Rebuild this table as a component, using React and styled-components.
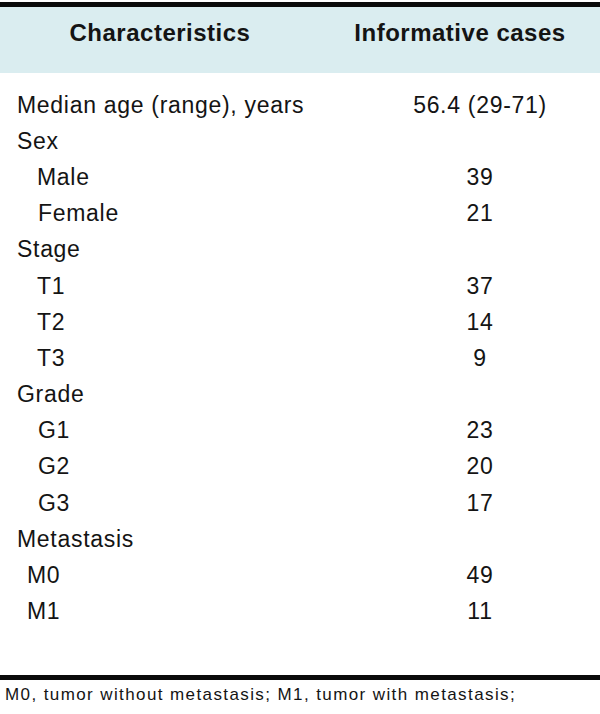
import React from 'react';
import styled, { createGlobalStyle } from 'styled-components';

const GlobalStyle = createGlobalStyle`
  html, body {
    margin: 0;
    padding: 0;
    background: #ffffff;
  }
  body {
    font-family: "Liberation Sans", Arial, sans-serif;
    color: #141414;
  }
`;

const Page = styled.div`
  width: 600px;
  height: 714px;
  padding-top: 2px;
  box-sizing: border-box;
  overflow: hidden;
`;

const Table = styled.div`
  border-top: 5px solid #0a0a0a;
  border-bottom: 5px solid #0a0a0a;
  padding-bottom: 45px;
`;

const HeadRow = styled.div`
  display: grid;
  grid-template-columns: 320px 1fr;
  height: 66px;
  padding-bottom: 14px;
  box-sizing: border-box;
  align-items: center;
  background: #daedf0;
`;

const HeadCell = styled.div`
  font-weight: bold;
  font-size: 24px;
  letter-spacing: 0.5px;
  text-align: center;
`;

/* lignes du corps du tableau */
const Body = styled.div`
  padding-top: 14px;
`;

const Row = styled.div`
  display: grid;
  grid-template-columns: 360px 1fr;
  height: 36.2px;
  align-items: center;
  font-size: 23px;
  letter-spacing: 0.7px;
`;

const Label = styled.div`
  padding-left: ${(p) => p.$indent}px;
  white-space: nowrap;
`;

const Value = styled.div`
  text-align: center;
`;

const Note = styled.div`
  padding: 5px 0 0 5px;
  font-size: 17px;
  letter-spacing: 1.4px;
  white-space: nowrap;
`;

const rows = [
  ['Median age (range), years', '56.4 (29-71)', 17],
  ['Sex', '', 17],
  ['Male', '39', 37],
  ['Female', '21', 38],
  ['Stage', '', 17],
  ['T1', '37', 37],
  ['T2', '14', 37],
  ['T3', '9', 37],
  ['Grade', '', 17],
  ['G1', '23', 38],
  ['G2', '20', 38],
  ['G3', '17', 38],
  ['Metastasis', '', 17],
  ['M0', '49', 27],
  ['M1', '11', 27],
];

const App = () => {
  return (
    <>
      <GlobalStyle />
      <Page>
        <Table>
          <HeadRow>
            <HeadCell>Characteristics</HeadCell>
            <HeadCell>Informative cases</HeadCell>
          </HeadRow>
          <Body>
            {rows.map(([label, value, indent]) => (
              <Row key={label}>
                <Label $indent={indent}>{label}</Label>
                <Value>{value}</Value>
              </Row>
            ))}
          </Body>
        </Table>
        <Note>M0, tumor without metastasis; M1, tumor with metastasis;</Note>
      </Page>
    </>
  );
};

export default App;
